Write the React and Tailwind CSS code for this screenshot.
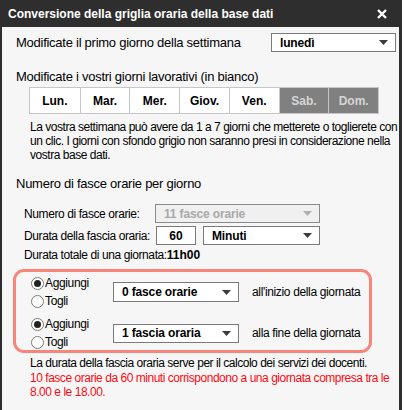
import React from 'react';

const font = { fontFamily: '"Liberation Sans", Arial, sans-serif' };

const Arrow = ({ disabled }) => (
  <svg width="9" height="5" viewBox="0 0 9 5" className="shrink-0">
    <path d="M0 0h9L4.5 5z" fill={disabled ? '#b0b0b0' : '#3c3c3c'} />
  </svg>
);

const Select = ({ value, className = '', disabled }) => (
  <div
    className={`flex items-center justify-between border ${
      disabled ? 'border-[#8a8a8a] bg-[#f0f0f0]' : 'border-[#7a7a7a] bg-white'
    } pl-[8px] pr-[7px] ${className}`}
  >
    <span className={`font-bold text-[12px] tracking-[-0.15px] ${disabled ? 'text-[#a8a8a8]' : 'text-black'}`}>
      {value}
    </span>
    <Arrow disabled={disabled} />
  </div>
);

const Radio = ({ checked, label }) => (
  <label className="flex items-center h-[18px] text-[12px] tracking-[-0.35px] text-black">
    <span className="w-[13px] h-[13px] rounded-full border border-[#7c7c7c] bg-white flex items-center justify-center mr-[1px]">
      {checked && <span className="w-[7px] h-[7px] rounded-full bg-[#222]" />}
    </span>
    {label}
  </label>
);

const days = [
  { d: 'Lun.', on: true },
  { d: 'Mar.', on: true },
  { d: 'Mer.', on: true },
  { d: 'Giov.', on: true },
  { d: 'Ven.', on: true },
  { d: 'Sab.', on: false },
  { d: 'Dom.', on: false },
];

export default function App() {
  return (
    <div className="w-[404px] h-[410px] bg-white overflow-hidden" style={font}>
      <div className="w-[402px] h-[410px] bg-[#2e2e2e] pl-[2px] pr-[3px] flex flex-col">
        {/* title bar */}
        <div className="h-[27px] shrink-0 flex items-center justify-between pl-[6px] pr-[12px]">
          <span className="text-white font-bold text-[12px]">Conversione della griglia oraria della base dati</span>
          <svg width="10" height="10" viewBox="0 0 10 10">
            <path d="M1 1l8 8M9 1l-8 8" stroke="#fff" strokeWidth="2.4" />
          </svg>
        </div>

        <div className="flex-1 min-h-0 overflow-hidden bg-[#f6f6f6] pl-[14px] pr-[3px] text-[13px] text-black">
          <div className="mt-[6px] flex items-center justify-between h-[19px]">
            <span className="tracking-[-0.26px]">Modificate il primo giorno della settimana</span>
            <Select value="lunedì" className="w-[125px] h-[19px]" />
          </div>

          <div className="mt-[17px] leading-[15px] tracking-[-0.26px]">
            Modificate i vostri giorni lavorativi (in bianco)
          </div>

          <div className="mt-[3px] ml-[13px] w-[350px] grid grid-cols-7 border border-[#c6c6c6] h-[27px]">
            {days.map((x, i) => (
              <div
                key={x.d}
                className={`flex items-center justify-center font-bold text-[12px] ${
                  i > 0 ? 'border-l border-[#c6c6c6]' : ''
                } ${x.on ? 'bg-white text-black' : 'bg-[#808080] text-[#d6d6d6]'}`}
              >
                {x.d}
              </div>
            ))}
          </div>

          <p className="mt-[6px] ml-[14px] -mr-[3px] leading-[14px] text-[12px] tracking-[-0.47px]">
            La vostra settimana può avere da 1 a 7 giorni che metterete o toglierete con un clic. I giorni con sfondo grigio non saranno presi in considerazione nella vostra base dati.
          </p>

          <div className="mt-[15px] leading-[14px] tracking-[-0.26px]">Numero di fasce orarie per giorno</div>

          <div className="ml-[8px] text-[12px] tracking-[-0.4px]">
            <div className="mt-[13px] flex items-center h-[19px]">
              <span className="w-[131px]">Numero di fasce orarie:</span>
              <Select value="11 fasce orarie" disabled className="w-[165px] h-[19px]" />
            </div>
            <div className="mt-[3px] flex items-center h-[19px]">
              <span className="w-[132px]">Durata della fascia oraria:</span>
              <div className="w-[40px] h-[19px] border border-[#7a7a7a] bg-white flex items-center justify-center font-bold tracking-normal">
                60
              </div>
              <Select value="Minuti" className="ml-[7px] w-[117px] h-[19px]" />
            </div>
            <div className="mt-[3px] leading-[14px]">
              Durata totale di una giornata:<span className="font-bold tracking-normal">11h00</span>
            </div>
          </div>

          <div className="mt-[7px] w-[359px] -ml-[3px] border-[3px] border-[#f7857a] rounded-[11px] pt-[2px] pl-[15px] h-[84px]">
            <div className="flex items-center">
              <div className="flex flex-col w-[82px]">
                <Radio checked label="Aggiungi" />
                <Radio label="Togli" />
              </div>
              <Select value="0 fasce orarie" className="w-[126px] h-[20px]" />
              <span className="ml-[13px] text-[12px] tracking-[-0.35px]">all'inizio della giornata</span>
            </div>
            <div className="flex items-center mt-[5px]">
              <div className="flex flex-col w-[82px]">
                <Radio checked label="Aggiungi" />
                <Radio label="Togli" />
              </div>
              <Select value="1 fascia oraria" className="w-[126px] h-[19px]" />
              <span className="ml-[13px] text-[12px] tracking-[-0.35px]">alla fine della giornata</span>
            </div>
          </div>

          <div className="mt-[3px] ml-[14px] -mr-[3px] text-[12px] leading-[14.5px] tracking-[-0.47px]">
            <div>La durata della fascia oraria serve per il calcolo dei servizi dei docenti.</div>
            <div className="text-[#ff0a14]">
              10 fasce orarie da 60 minuti corrispondono a una giornata compresa tra le 8.00 e le 18.00.
            </div>
          </div>
        </div>
      </div>
    </div>
  );
}
